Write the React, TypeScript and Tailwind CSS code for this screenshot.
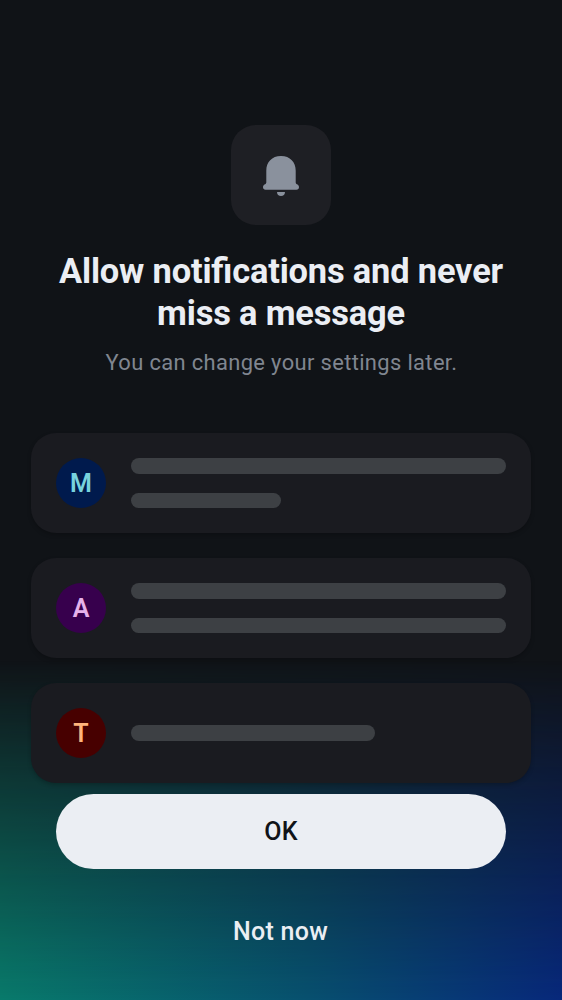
type Placeholder = {
  letter: string;
  avatar: string;
  bars: string[];
};

const placeholders: Placeholder[] = [
  { letter: "M", avatar: "bg-[#001a4d] text-[#78d2de]", bars: ["w-[375px]", "w-[150px]"] },
  { letter: "A", avatar: "bg-[#37004d] text-[#e6b2ea]", bars: ["w-[375px]", "w-[375px]"] },
  { letter: "T", avatar: "bg-[#470000] text-[#ffb47c]", bars: ["w-[244px]"] },
];

function BellIcon() {
  return (
    <svg width="50" height="50" viewBox="0 0 50 50" fill="#8a919d" aria-hidden="true">
      <path d="M25 6C15.8 6 10.3 12.3 10.3 20.5V32.2C10.3 33.4 9.8 33.8 9 34.3C7.7 35.1 7 36 7 37.2C7 38.7 8 39.7 9.5 39.7H40.5C42 39.7 43 38.7 43 37.2C43 36 42.3 35.1 41 34.3C40.2 33.8 39.7 33.4 39.7 32.2V20.5C39.7 12.3 34.2 6 25 6Z" />
      <path d="M21 42H29C29 44.4 27.4 46 25 46C22.6 46 21 44.4 21 42Z" />
    </svg>
  );
}

function MessageCard({ letter, avatar, bars }: Placeholder) {
  return (
    <div className="flex h-[100px] items-center gap-[25px] rounded-[25px] bg-[#1a1b20] px-[25px] shadow-[0_2px_4px_rgba(0,0,0,0.22)]">
      <div className={`flex size-[50px] shrink-0 items-center justify-center rounded-full pt-[2px] text-[25px] font-semibold ${avatar}`}>
        {letter}
      </div>
      <div className="flex flex-col gap-[19px]">
        {bars.map((width, index) => (
          <div key={index} className={`h-[15.5px] rounded-full bg-[#3d4044] ${width}`} />
        ))}
      </div>
    </div>
  );
}

export default function App() {
  return (
    <main className="relative isolate flex h-[1000px] w-[562px] flex-col items-center overflow-hidden bg-[#101317] pt-[125px] font-['Roboto',sans-serif]">
      <div className="absolute inset-x-0 bottom-0 -z-10 h-[340px] bg-[linear-gradient(to_right,#087a6b,#07506f_55%,#07287b)] mask-t-from-0% mask-t-to-100%" />
      <div className="flex size-[100px] items-center justify-center rounded-[25px] bg-[#1e1f24]">
        <BellIcon />
      </div>
      <h1 className="mt-[25px] text-center text-[34.4px] leading-[42px] font-bold tracking-[-0.16px] text-[#ebeef4] [font-feature-settings:'liga']">
        Allow notifications and never
        <br />
        miss a message
      </h1>
      <p className="mt-[13px] pl-[1px] text-[21.9px] leading-[32px] tracking-[0.36px] text-[#808690]">
        You can change your settings later.
      </p>
      <div className="mt-[54px] flex w-[500px] flex-col gap-[25px]">
        {placeholders.map((item) => (
          <MessageCard key={item.letter} {...item} />
        ))}
      </div>
      <button className="mt-[11px] h-[75px] w-[450px] shrink-0 rounded-full bg-[#ebeef3] text-[25px] font-medium tracking-[0.2px] text-[#101317]">
        OK
      </button>
      <button className="mt-[25px] h-[75px] w-[450px] shrink-0 pr-[1px] text-[25px] font-medium tracking-[0.26px] text-[#ebeef3]">
        Not now
      </button>
    </main>
  );
}
